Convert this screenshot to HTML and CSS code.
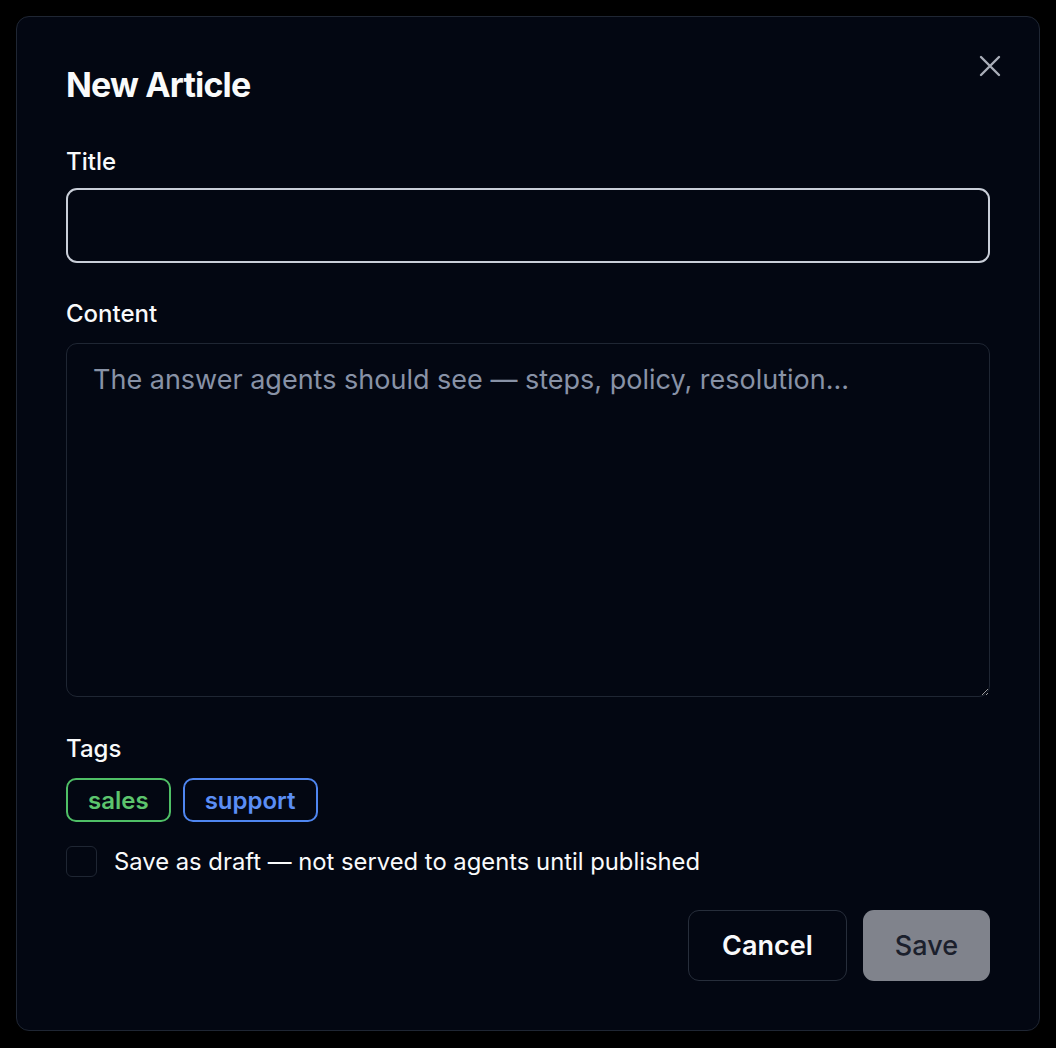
FILE: index.html
```html
<!DOCTYPE html>
<html lang="en">
<head>
  <meta charset="UTF-8" />
  <meta name="viewport" content="width=device-width, initial-scale=1.0" />
  <title>New Article</title>
  <link rel="stylesheet" href="styles.css">
</head>
<body>

  <div class="dialog">
    <button class="close" aria-label="Close">
      <svg width="24" height="24" viewBox="0 0 24 24" fill="none" stroke="currentColor" stroke-width="2.4" stroke-linecap="round">
        <path d="M3 3 L21 21 M21 3 L3 21" />
      </svg>
    </button>

    <h1>New Article</h1>

    <div class="field field-title">
      <label for="title">Title</label>
      <input id="title" type="text" class="input">
    </div>

    <div class="field field-content">
      <label for="content">Content</label>
      <textarea id="content" class="textarea" placeholder="The answer agents should see — steps, policy, resolution..."></textarea>
    </div>

    <div class="field field-tags">
      <label>Tags</label>
      <div class="tags">
        <span class="tag tag-green">sales</span>
        <span class="tag tag-blue">support</span>
      </div>
    </div>

    <label class="draft">
      <span class="checkbox"></span>
      <span>Save as draft — not served to agents until published</span>
    </label>

    <div class="actions">
      <button class="btn btn-cancel">Cancel</button>
      <button class="btn btn-save">Save</button>
    </div>
  </div>

</body>
</html>
```

FILE: styles.css
```css
:root {
  --bg: #030712;
  --borda: #1f2633;
  --texto: #f9fafb;
  --placeholder: #8892a6;
}

* {
  box-sizing: border-box;
}

body {
  margin: 0;
  padding: 16px;
  background-color: #000000;
  font-family: Inter, 'Noto Sans', sans-serif;
  color: var(--texto);
}

.dialog {
  position: relative;
  background-color: var(--bg);
  border: 1px solid var(--borda);
  border-radius: 13px;
  padding: 47px 49px 49px;
}

.close {
  position: absolute;
  top: 37px;
  right: 37px;
  width: 24px;
  height: 24px;
  padding: 0;
  background: none;
  border: none;
  color: #a9aeb8;
  cursor: pointer;
}

.close svg {
  display: block;
}

h1 {
  margin: 0 0 38px;
  font-size: 34px;
  line-height: 42px;
  font-weight: 700;
  letter-spacing: -0.025em;
}

.field label {
  display: block;
  font-size: 24px;
  line-height: 36px;
  font-weight: 500;
  margin-bottom: 11px;
}

.field-title label {
  margin-bottom: 8px;
}

.field-content {
  margin-top: 33px;
}

.field-tags {
  margin-top: 34px;
}

.input {
  display: block;
  width: 100%;
  height: 75px;
  background-color: var(--bg);
  border: 2px solid #c9ced8;
  border-radius: 11px;
  outline: none;
  color: var(--texto);
  font-family: inherit;
  font-size: 27px;
  padding: 0 24px;
}

.textarea {
  display: block;
  width: 100%;
  height: 354px;
  background-color: var(--bg);
  border: 1.5px solid var(--borda);
  border-radius: 11px;
  outline: none;
  color: var(--texto);
  font-family: inherit;
  font-size: 27px;
  line-height: 40px;
  padding: 16px 26px;
  resize: vertical;
}

.textarea::placeholder {
  color: var(--placeholder);
}

.tags {
  display: flex;
  gap: 12px;
}

.tag {
  display: inline-flex;
  align-items: center;
  height: 44px;
  padding: 0 20px;
  border: 2px solid;
  border-radius: 10px;
  font-size: 24px;
  font-weight: 600;
}

.tag-green {
  border-color: #4fbf66;
  color: #5cc46d;
}

.tag-blue {
  border-color: #4f86f0;
  color: #5b8ef5;
}

.draft {
  display: flex;
  align-items: center;
  gap: 17px;
  margin-top: 24px;
  font-size: 23.8px;
  line-height: 31px;
  cursor: pointer;
}

.checkbox {
  width: 31px;
  height: 31px;
  border: 1.5px solid var(--borda);
  border-radius: 6px;
  flex-shrink: 0;
}

.actions {
  display: flex;
  justify-content: flex-end;
  gap: 16px;
  margin-top: 33px;
}

.btn {
  height: 71px;
  border-radius: 11px;
  font-family: inherit;
  font-size: 27px;
  cursor: pointer;
}

.btn-cancel {
  background-color: var(--bg);
  border: 1.5px solid #272e3b;
  color: var(--texto);
  font-weight: 600;
  padding: 0 33px;
}

.btn-save {
  background-color: #80838c;
  border: none;
  color: #1b202c;
  font-weight: 500;
  padding: 0 32px;
}
```
